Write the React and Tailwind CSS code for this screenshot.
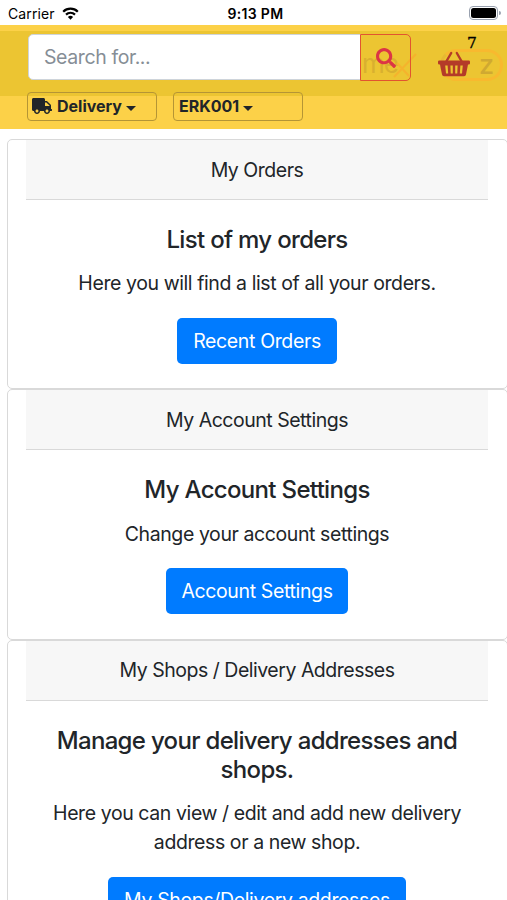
import { FaSearch, FaTruck } from "react-icons/fa";

const cards = [
  {
    header: "My Orders",
    title: "List of my orders",
    text: "Here you will find a list of all your orders.",
    button: "Recent Orders",
  },
  {
    header: "My Account Settings",
    title: "My Account Settings",
    text: "Change your account settings",
    button: "Account Settings",
  },
  {
    header: "My Shops / Delivery Addresses",
    title: "Manage your delivery addresses and shops.",
    text: "Here you can view / edit and add new delivery address or a new shop.",
    button: "My Shops/Delivery addresses",
  },
];

function WifiIcon() {
  return (
    <svg className="w-[17px] h-[13px]" viewBox="0 0 17 13" fill="none">
      <path
        d="M1.2 4.7a10.4 10.4 0 0 1 14.6 0M4 7.6a6.4 6.4 0 0 1 9 0"
        stroke="#000"
        strokeWidth="2.2"
      />
      <path d="M8.5 12.8 5.9 10.1a3.7 3.7 0 0 1 5.2 0z" fill="#000" />
    </svg>
  );
}

function BasketIcon() {
  return (
    <svg className="w-[32px] h-[26px]" viewBox="0 0 32 26">
      <path
        d="M8 11 13.2 2M24 11 18.8 2"
        stroke="currentColor"
        strokeWidth="2.4"
        strokeLinecap="round"
      />
      <path
        fill="currentColor"
        fillRule="evenodd"
        d="M1.3 9.5h29.4a1.3 1.3 0 0 1 1.3 1.3v1.4a1.3 1.3 0 0 1-1.3 1.3H30L28 23.6a2 2 0 0 1-2 1.7H6a2 2 0 0 1-2-1.7L2 13.5h-.7A1.3 1.3 0 0 1 0 12.2v-1.4a1.3 1.3 0 0 1 1.3-1.3zM7.2 14.5l.8 8h2.2l-.6-8zM12.4 14.5l.3 8h2.1v-8zM17.2 14.5v8h2.1l.3-8zM22.4 14.5l-.6 8H24l.8-8z"
      />
    </svg>
  );
}

function Caret() {
  return (
    <span className="ml-[4px] mt-[5px] border-x-5 border-t-5 border-x-transparent border-t-[#212529]" />
  );
}

function StatusBar() {
  return (
    <div className="h-[25px] pl-2 pr-[6px] grid grid-cols-3 items-center text-[14px] text-black">
      <div className="flex items-center gap-[7px] pt-[2px] tracking-[0.1px]">
        <span>Carrier</span>
        <WifiIcon />
      </div>
      <div className="text-center text-[14px] pt-[2px] ml-[2px] font-semibold tracking-[0.3px]">
        9:13 PM
      </div>
      <div className="flex justify-end items-center pt-[1px]">
        <div className="w-[29px] h-[14px] p-[1px] rounded-[4px] border border-gray-400">
          <div className="w-full h-full rounded-[2.5px] bg-black" />
        </div>
        <div className="w-[1.5px] h-[4px] ml-px rounded-r bg-gray-400" />
      </div>
    </div>
  );
}

function Header() {
  return (
    <header className="h-[104px] pt-[6px] bg-[#fcd148] text-[#212529]">
      <div className="relative h-[65px] pl-7 pt-[3px] flex items-start bg-[#ecc532]">
        {/* faded brand behind the search button and the basket */}
        <div className="absolute left-[362px] top-[16px] text-[26px] leading-[34px] tracking-[-1px] text-[#d9b02f]">
          me
        </div>
        <svg
          className="absolute left-[392px] top-[20px] w-[25px] h-[28px]"
          viewBox="0 0 25 28"
          fill="none"
          stroke="#f5b32d"
          strokeWidth="2"
        >
          <path d="M2 26 24 3M5 12l12 13" />
        </svg>
        <div className="absolute left-[440px] top-[18px] w-[63px] h-[32px] pl-[36px] rounded-full border-3 border-l-[#e6b933] border-[#f8b92f] text-[27px] leading-[25px] font-medium text-[#d0a931]">
          z
        </div>
        <div className="relative w-[333px] h-[46px] pl-[15px] pt-[2px] flex items-center rounded-l-[5px] border border-[#ced4da] bg-white text-[19.5px] tracking-[-0.4px] text-[#868e96]">
          Search for...
        </div>
        <button className="relative w-[51px] h-[47px] -ml-px flex items-center justify-center rounded-r-[5px] border-[1.5px] border-[#e2542f] text-[#dc3545]">
          <FaSearch className="w-[20px] h-[20px]" />
        </button>
        <div className="relative ml-[27px] mt-[17px] text-[#b43a28]">
          <BasketIcon />
          <span className="absolute left-[29px] -top-[17px] font-['DejaVu_Serif'] text-[15.5px] leading-[18px] text-black [-webkit-text-stroke:0.3px_black]">
            7
          </span>
        </div>
      </div>
      <div className="pl-[27px] -mt-[4px] flex gap-4 text-[16px] font-bold">
        <button className="relative w-[130px] h-[29px] pl-[4px] pb-[2px] flex items-center rounded-[4px] border border-[#b59535]">
          <FaTruck className="w-[20px] h-[16px] mr-[5px]" />
          Delivery
          <Caret />
        </button>
        <button className="relative w-[130px] h-[29px] pl-[5px] pb-[2px] flex items-center rounded-[4px] border border-[#b59535]">
          ERK001
          <Caret />
        </button>
      </div>
    </header>
  );
}

function Card({ header, title, text, button }) {
  return (
    <div className="pl-[18px] pr-[19px] pb-[24.3px] rounded-[5px] border border-[#d9d9d9] bg-white text-center text-[19.5px] leading-[29.3px] text-[#212529]">
      <div className="h-[60px] pt-[15.6px] border-b border-[#d9d9d9] bg-[#f7f7f7] tracking-[-0.48px]">
        {header}
      </div>
      <div className="px-6 pt-[25px]">
        <h5 className="mb-[15px] text-[24px] font-medium tracking-[-0.68px]">
          {title}
        </h5>
        <p className="mb-[19px] tracking-[-0.41px]">{text}</p>
        <button className="h-[46.4px] px-[15.7px] pt-px rounded-[5px] bg-[#007bff] text-white tracking-[-0.36px] whitespace-nowrap align-top">
          {button}
        </button>
      </div>
    </div>
  );
}

export default function App() {
  return (
    <div className="h-[900px] overflow-hidden bg-white font-['Inter',sans-serif]">
      <StatusBar />
      <Header />
      <main className="pl-[7px] pt-[10px] -mr-px">
        {cards.map((card) => (
          <Card key={card.header} {...card} />
        ))}
      </main>
    </div>
  );
}
